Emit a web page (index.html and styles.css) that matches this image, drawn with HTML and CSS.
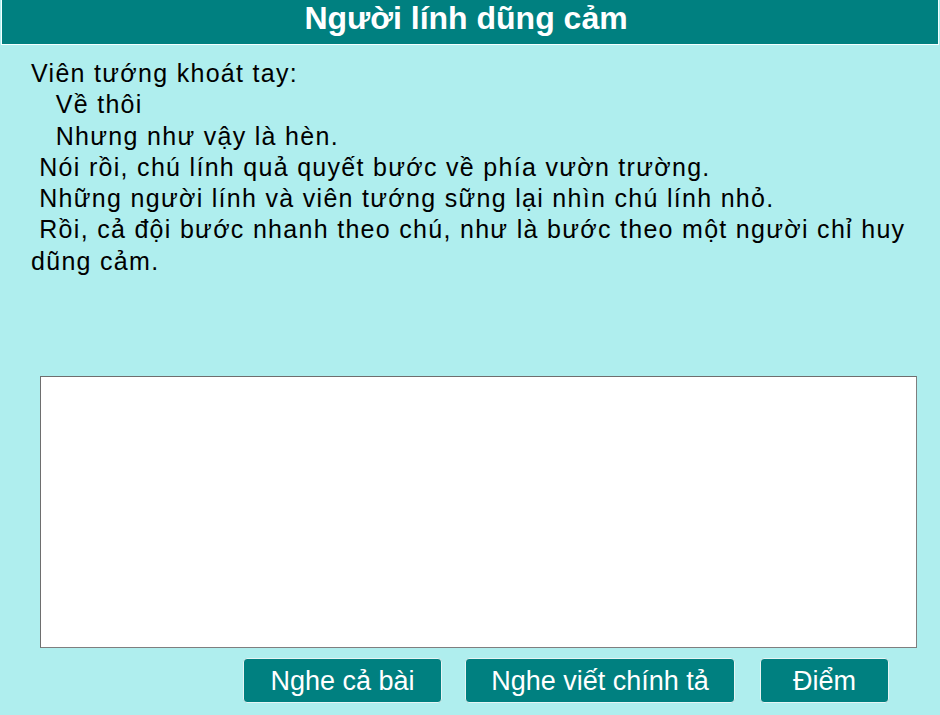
FILE: index.html
```html
<!DOCTYPE html>
<html lang="vi">
<head>
<meta charset="utf-8">
<title>Người lính dũng cảm</title>
<link rel="stylesheet" href="styles.css">
</head>
<body>
<div class="header">Người lính dũng cảm</div>
<div class="passage">Viên tướng khoát tay:
   Về thôi
   Nhưng như vậy là hèn.
 Nói rồi, chú lính quả quyết bước về phía vườn trường.
 Những người lính và viên tướng sững lại nhìn chú lính nhỏ.
 Rồi, cả đội bước nhanh theo chú, như là bước theo một người chỉ huy dũng cảm.</div>
<textarea class="answer"></textarea>
<div class="actions">
  <button class="btn btn-all">Nghe cả bài</button>
  <button class="btn btn-dictate">Nghe viết chính tả</button>
  <button class="btn btn-score">Điểm</button>
</div>
</body>
</html>
```
FILE: styles.css
```css
html, body {
  margin: 0;
  padding: 0;
}
body {
  background: #afeeee;
  width: 940px;
  height: 715px;
  overflow: hidden;
  font-family: "Liberation Sans", Arial, sans-serif;
}
.header {
  margin: 0 1px;
  height: 44px;
  padding-right: 8px;
  border: 1px solid #f4ffff;
  border-top: none;
  background: #008080;
  color: #ffffff;
  font-weight: bold;
  font-size: 32px;
  line-height: 36px;
  text-align: center;
}
.passage {
  margin: 13px 8px 0 31px;
  height: 318px;
  font-size: 25px;
  letter-spacing: 1.3px;
  line-height: 31.3px;
  color: #000000;
  white-space: pre-wrap;
}
.answer {
  display: block;
  box-sizing: border-box;
  margin: 0 0 0 40px;
  width: 877px;
  height: 272px;
  padding: 2px;
  border: 1px solid #7f7f7f;
  border-top-color: #6e6e6e;
  border-left-color: #6e6e6e;
  background: #ffffff;
  resize: none;
  outline: none;
}
.actions {
  display: flex;
  margin-top: 10px;
  padding-left: 243px;
}
.btn {
  box-sizing: border-box;
  height: 45px;
  padding: 0;
  border: 1px solid #e6f4f4;
  border-radius: 4px;
  background: #008080;
  color: #ffffff;
  font-family: "Liberation Sans", Arial, sans-serif;
  font-size: 27px;
  line-height: 36px;
  white-space: nowrap;
}
.btn-all {
  width: 199px;
}
.btn-dictate {
  width: 270px;
  margin-left: 23px;
}
.btn-score {
  width: 129px;
  margin-left: 25px;
}
```
